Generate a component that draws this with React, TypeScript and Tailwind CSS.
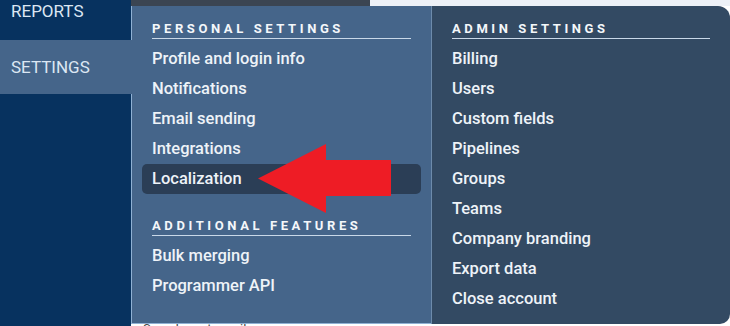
import React from "react";

const personal = [
  "Profile and login info",
  "Notifications",
  "Email sending",
  "Integrations",
  "Localization",
];
const additional = ["Bulk merging", "Programmer API"];
const admin = [
  "Billing",
  "Users",
  "Custom fields",
  "Pipelines",
  "Groups",
  "Teams",
  "Company branding",
  "Export data",
  "Close account",
];

function Heading({ children }: { children: React.ReactNode }) {
  return (
    <div className="border-b border-[#c9d8e8] pb-[1px] mx-[10px] text-[13px] leading-[16px] font-bold tracking-[3.6px] text-[#f4f7fa]">
      {children}
    </div>
  );
}

function Item({ label, active }: { label: string; active?: boolean }) {
  return (
    <div
      className={`h-[30px] px-[10px] flex items-center text-[16.5px] font-medium text-[#eef3f8] rounded-[5px] ${
        active ? "bg-[#2b3e56]" : ""
      }`}
    >
      {label}
    </div>
  );
}

export default function App() {
  return (
    <div
      className="relative w-[730px] h-[326px] overflow-hidden flex bg-white"
      style={{ fontFamily: "Roboto, 'Liberation Sans', sans-serif" }}
    >
      <div className="w-[131px] shrink-0 bg-[#07325f] flex flex-col">
        <div className="h-[40px] px-[11px] text-[17px] leading-[20px] text-[#dce7f3] pt-[1px]">
          REPORTS
        </div>
        <div className="relative z-10 w-[133px] h-[54px] bg-[#45658a] px-[11px] pt-[2px] flex items-center text-[17px] text-[#dce7f3]">
          SETTINGS
        </div>
      </div>
      <div className="flex-1 flex flex-col">
        <div className="h-[6px] flex">
          <div className="w-[239px] bg-[#3b4552]" />
          <div className="flex-1 bg-[#edf1f7]" />
        </div>
        <div className="flex-1 bg-white" />
        <div className="h-[14px] -mb-[10px] px-[12px] text-[13px] leading-[14px] text-[#444]">
          Search past emails
        </div>
      </div>

      {/* dropdown menu */}
      <div className="absolute left-[131px] top-[6px] w-[599px] h-[318px] flex">
        <div className="w-[300px] h-full bg-[#45658a] border-l border-b border-[#8fb1d4] pt-[15px] px-[10px]">
          <Heading>PERSONAL SETTINGS</Heading>
          <div className="mt-[5px] flex flex-col">
            {personal.map((p) => (
              <Item key={p} label={p} active={p === "Localization"} />
            ))}
          </div>
          <div className="mt-[24px]">
            <Heading>ADDITIONAL FEATURES</Heading>
          </div>
          <div className="mt-[5px] flex flex-col">
            {additional.map((p) => (
              <Item key={p} label={p} />
            ))}
          </div>
        </div>
        <div className="flex-1 h-full bg-[#334a63] border-l border-[#6d8bab] rounded-tr-[12px] rounded-br-[10px] pt-[15px] pl-[10px] pr-[10px]">
          <Heading>ADMIN SETTINGS</Heading>
          <div className="mt-[5px] flex flex-col">
            {admin.map((p) => (
              <Item key={p} label={p} />
            ))}
          </div>
        </div>
      </div>

      {/* red arrow annotation */}
      <svg
        className="absolute left-0 top-0 pointer-events-none"
        width="730"
        height="326"
        viewBox="0 0 730 326"
      >
        <polygon
          points="258,178.5 326,144 326,160 391,160 391,196 326,196 326,213"
          fill="#ee1c25"
        />
      </svg>
    </div>
  );
}
